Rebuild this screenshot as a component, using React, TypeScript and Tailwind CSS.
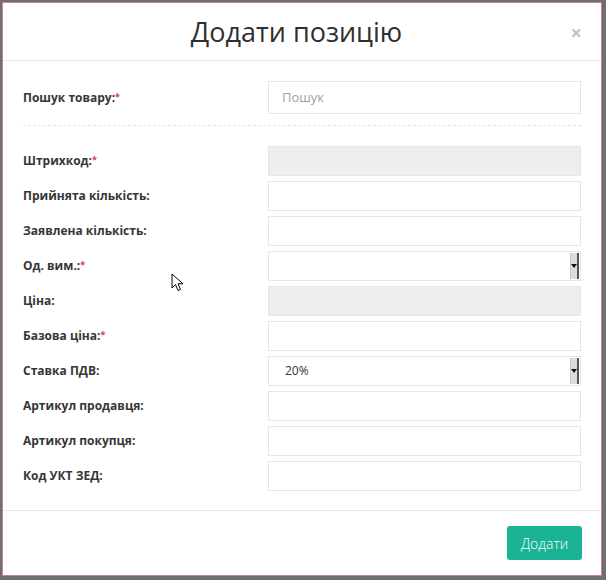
import React from "react";

const font = { fontFamily: '"Open Sans", "Noto Sans", sans-serif' };

type Row = { label: string; req?: boolean; kind: "input" | "gray" | "select"; value?: string };

const rows: Row[] = [
  { label: "Штрихкод:", req: true, kind: "gray" },
  { label: "Прийнята кількість:", kind: "input" },
  { label: "Заявлена кількість:", kind: "input" },
  { label: "Од. вим.:", req: true, kind: "select" },
  { label: "Ціна:", kind: "gray" },
  { label: "Базова ціна:", req: true, kind: "input" },
  { label: "Ставка ПДВ:", kind: "select", value: "20%" },
  { label: "Артикул продавця:", kind: "input" },
  { label: "Артикул покупця:", kind: "input" },
  { label: "Код УКТ ЗЕД:", kind: "input" },
];

function Label({ text, req }: { text: string; req?: boolean }) {
  return (
    <div className="text-[12px] font-bold text-[#363636] leading-none">
      {text}
      {req && <sup className="text-[#e0325c] text-[9px] font-bold relative top-[-2px]">*</sup>}
    </div>
  );
}

function Field({ row }: { row: Row }) {
  if (row.kind === "gray") {
    return <div className="h-[30px] border border-[#e5e6e7] bg-[#eeeeee]" />;
  }
  if (row.kind === "select") {
    return (
      <div className="h-[30px] border border-[#e5e6e7] bg-white flex items-center relative">
        <span className="pl-[16px] text-[12px] text-[#333]">{row.value ?? ""}</span>
        <div className="absolute right-[1px] top-[1px] bottom-[1px] w-[9px] bg-[#dcdcdc] border-l border-[#c8c8c8] border-r-2 border-r-[#555] flex items-center justify-center">
          <div className="w-0 h-0 border-l-[3px] border-r-[3px] border-t-[4px] border-l-transparent border-r-transparent border-t-[#111]" />
        </div>
      </div>
    );
  }
  return <div className="h-[30px] border border-[#e5e6e7] bg-white" />;
}

export default function App() {
  return (
    <div className="w-[606px] h-[580px] bg-[#6f6f6f] pt-[2px] pl-[2px] relative" style={font}>
      <div className="w-[600px] h-[574px] bg-white border border-[#d07a9c] flex flex-col">
        {/* header */}
        <div className="h-[58px] border-b border-[#e5e5e5] flex items-center justify-center relative shrink-0">
          <h1 className="text-[27px] text-[#2f2f2f] font-medium leading-none mr-[11px] mt-[-1px]">Додати позицію</h1>
          <span className="absolute right-[19px] top-[20px] text-[20px] font-bold text-[#c2c2c2] leading-none">×</span>
        </div>
        {/* body */}
        <div className="flex-1 px-[20px] pt-[20px]">
          <div className="grid grid-cols-[245px_1fr] items-center">
            <Label text="Пошук товару:" req />
            <div className="h-[33px] border border-[#e5e6e7] bg-white flex items-center pl-[13px] text-[13px] text-[#a0a0a0]">
              Пошук
            </div>
          </div>
          <div className="border-t border-dashed border-[#e4e4e4] mt-[11px] mb-[20px]" />
          <div className="flex flex-col gap-[5px]">
            {rows.map((r) => (
              <div key={r.label} className="grid grid-cols-[245px_1fr] items-center">
                <Label text={r.label} req={r.req} />
                <Field row={r} />
              </div>
            ))}
          </div>
        </div>
        {/* footer */}
        <div className="h-[65px] border-t border-[#e5e5e5] flex items-start justify-end px-[19px] pt-[15px] shrink-0">
          <button className="h-[34px] w-[75px] bg-[#1ab394] text-white text-[14px] font-light rounded-[3px] flex items-center justify-center">
            Додати
          </button>
        </div>
      </div>
      {/* mouse cursor */}
      <svg className="absolute left-[171px] top-[273px]" width="14" height="20" viewBox="0 0 14 20">
        <path d="M1 1 L1 15 L4.5 11.5 L7 17.5 L9.5 16.5 L7 10.8 L12 10.8 Z" fill="#fff" stroke="#000" strokeWidth="1" strokeLinejoin="round" />
      </svg>
    </div>
  );
}
